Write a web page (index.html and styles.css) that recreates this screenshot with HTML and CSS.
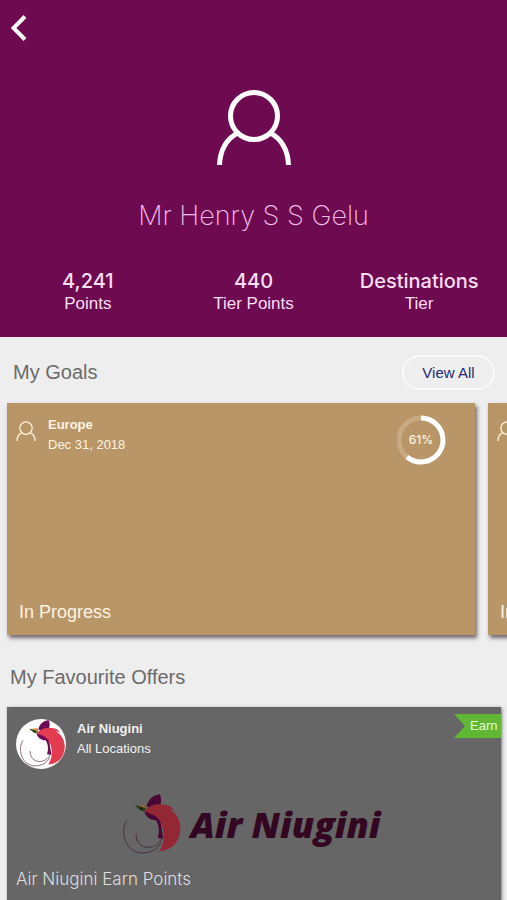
FILE: index.html
```html
<!DOCTYPE html>
<html lang="en">
<head>
<meta charset="utf-8">
<meta name="viewport" content="width=device-width, initial-scale=1">
<title>My Profile</title>
<link rel="stylesheet" href="styles.css">
</head>
<body>
<svg class="defs" aria-hidden="true">
  <symbol id="person" viewBox="0 0 76 76">
    <circle cx="38" cy="27" r="23.500"/>
    <path d="M3.500 76C4 61 11 49 22 44M72.500 76C72 61 65 49 54 44"/>
  </symbol>
  <symbol id="bird" viewBox="18 22 192 192">
    <path d="M45 104C24 132 36 202 92 202C118 202 137 190 147 170" fill="none" stroke="#6b4863" stroke-width="3"/>
    <path d="M72 145C72 172 90 185 108 185C126 185 140 176 148 160" fill="none" stroke="#6b4863" stroke-width="3"/>
    <path d="M104 62C108 42 122 29 144 26C148 38 149 50 143 64L122 72Z" fill="#6e0a55"/>
    <path d="M97 74L140 72L154 160L137 156C144 140 141 118 132 104C114 104 98 92 97 74Z" fill="#6e0a55"/>
    <path d="M97 76C116 58 132 54 150 57C168 57 181 62 186 75C180 70 175 69 171 70C198 83 207 112 205 134C202 168 180 195 142 197C152 180 156 166 155 146C154 124 146 103 130 91C119 84 108 84 97 76Z" fill="#e23c50"/>
    <path d="M68 59L86 61L101 59L102 70L93 78L84 73Z" fill="#3f6121"/>
    <path d="M80 59L100 57L101 68L92 68Z" fill="#d99a4a"/>
    <circle cx="89" cy="68" r="4" fill="#172010"/>
  </symbol>
</svg>

<header class="profile">
  <button class="back" type="button" aria-label="Back">
    <svg viewBox="0 0 16 26"><path d="M14 1.500L2.500 13L14 24.500"/></svg>
  </button>
  <svg class="avatar" aria-hidden="true"><use href="#person"/></svg>
  <h1 class="name">Mr Henry S S Gelu</h1>
  <dl class="stats">
    <div class="stat"><dd>4,241</dd><dt>Points</dt></div>
    <div class="stat"><dd>440</dd><dt>Tier Points</dt></div>
    <div class="stat"><dd>Destinations</dd><dt>Tier</dt></div>
  </dl>
</header>

<main>
  <section>
    <div class="section-head goals-head">
      <h2>My Goals</h2>
      <button class="view-all" type="button">View All</button>
    </div>
    <div class="goals">
      <article class="goal">
        <div class="goal-top">
          <svg class="goal-icon" aria-hidden="true"><use href="#person"/></svg>
          <div class="label"><h3>Europe</h3><p>Dec 31, 2018</p></div>
          <div class="ring">
            <svg viewBox="0 0 50 50" aria-hidden="true">
              <circle class="track" cx="25" cy="25" r="22"/>
              <circle class="value" cx="25" cy="25" r="22" pathLength="100" stroke-dasharray="61 39" transform="rotate(-90 25 25)"/>
            </svg>
            <span>61%</span>
          </div>
        </div>
        <p class="status">In Progress</p>
      </article>
      <article class="goal">
        <div class="goal-top">
          <svg class="goal-icon" aria-hidden="true"><use href="#person"/></svg>
        </div>
        <p class="status">In Progress</p>
      </article>
    </div>
  </section>

  <section>
    <div class="section-head offers-head"><h2>My Favourite Offers</h2></div>
    <article class="offer">
      <div class="offer-top">
        <svg class="offer-logo" aria-hidden="true"><use href="#bird"/></svg>
        <div class="label"><h3>Air Niugini</h3><p>All Locations</p></div>
        <span class="tag">Earn</span>
      </div>
      <div class="brand">
        <svg class="brand-bird" aria-hidden="true"><use href="#bird"/></svg>
        <span>Air Niugini</span>
      </div>
      <p class="offer-title">Air Niugini Earn Points</p>
    </article>
  </section>
</main>
</body>
</html>
```
FILE: styles.css
```css
* { box-sizing: border-box; }

body, h1, h2, h3, p, dl, dd { margin: 0; }

body {
  background: #eeeeee;
  color: #ffffff;
  font-family: "Liberation Sans", Arial, sans-serif;
  overflow: hidden;
}

button {
  font: inherit;
  padding: 0;
  cursor: pointer;
}

.defs {
  position: absolute;
  width: 0;
  height: 0;
}

.profile {
  display: flex;
  flex-direction: column;
  align-items: center;
  padding: 12px 5px 23px;
  background: #6e0a50;
}

.back {
  align-self: flex-start;
  width: 32px;
  height: 32px;
  padding: 3px 6px;
  border: 0;
  background: none;
}

.back svg {
  display: block;
  width: 16px;
  height: 26px;
  fill: none;
  stroke: #ffffff;
  stroke-width: 4;
}

.avatar {
  width: 76px;
  height: 76px;
  margin-top: 45px;
  fill: none;
  stroke: #ffffff;
  stroke-width: 5;
}

.name {
  margin-top: 31px;
  font: 200 27px/40px Inter, sans-serif;
  color: #f2bde8;
}

.stats {
  display: grid;
  grid-template-columns: repeat(3, 1fr);
  width: 100%;
  margin-top: 33px;
}

.stat {
  text-align: center;
  color: #f8dff4;
}

.stat dd {
  font: 500 20px/24px Inter, sans-serif;
}

.stat dt {
  font-size: 17px;
  line-height: 21px;
}

.section-head {
  display: flex;
  align-items: center;
  justify-content: space-between;
}

.section-head h2 {
  font-size: 20px;
  font-weight: 400;
  color: #6b6b6b;
}

.goals-head {
  height: 66px;
  padding: 5px 12px 0 13px;
}

.offers-head {
  height: 72px;
  padding: 12px 10px 0;
}

.view-all {
  width: 93px;
  height: 35px;
  border: 2px solid #fafafa;
  border-radius: 18px;
  background: transparent;
  color: #29296f;
  font-size: 15px;
}

.goals {
  display: flex;
  gap: 13px;
  padding-left: 7px;
}

.goal {
  display: flex;
  flex: 0 0 calc(100% - 32px);
  flex-direction: column;
  justify-content: space-between;
  height: 232px;
  padding: 12px 29px 12px 9px;
  background: #b89668;
  box-shadow: 2px 3px 4px rgba(60, 40, 50, 0.7);
}

.goal-top {
  display: flex;
  align-items: flex-start;
}

.goal-icon {
  width: 20px;
  height: 20px;
  margin: 6px 12px 0 0;
  fill: none;
  stroke: #fff0dc;
  stroke-width: 5;
}

.label {
  flex: 1;
  font-size: 13px;
  line-height: 20px;
}

.label h3 {
  font-size: 13px;
}

.goal .label {
  color: #fff3e2;
}

.ring {
  display: grid;
  place-items: center;
  width: 50px;
  height: 50px;
  font: 500 12px/16px Inter, sans-serif;
  color: #fff3e2;
}

.ring > * {
  grid-area: 1 / 1;
}

.ring circle {
  fill: none;
  stroke-width: 5;
}

.ring .track { stroke: #c8aa83; }

.ring .value { stroke: #ffffff; }

.status {
  padding-left: 3px;
  font-size: 18px;
  line-height: 22px;
  color: #fff3e2;
}

.offer {
  display: flex;
  flex-direction: column;
  margin: 0 6px 12px 7px;
  padding: 7px 0 9px 9px;
  background: #666666;
  box-shadow: 1px 1px 3px rgba(0, 0, 0, 0.5);
}

.offer-top {
  display: flex;
  align-items: flex-start;
}

.offer-logo {
  width: 50px;
  height: 50px;
  margin: 5px 11px 0 0;
  border-radius: 50%;
  background: #ffffff;
}

.offer .label {
  padding-top: 5px;
  color: #f2f2f2;
}

.tag {
  width: 47px;
  padding-left: 16px;
  background: #60b733;
  clip-path: polygon(0 0, 100% 0, 100% 100%, 0 100%, 11px 50%);
  color: #e5fbd8;
  font-size: 13px;
  line-height: 24px;
}

.brand {
  display: flex;
  align-items: center;
  justify-content: center;
  gap: 8px;
  margin-top: 22px;
  padding-right: 18px;
  color: #330622;
  font: italic 800 36px/68px "Open Sans", sans-serif;
}

.brand-bird {
  width: 64px;
  height: 64px;
  filter: brightness(0.65);
}

.offer-title {
  margin-top: 7px;
  font: 300 17px/26px Inter, sans-serif;
  color: #dedede;
}
```
